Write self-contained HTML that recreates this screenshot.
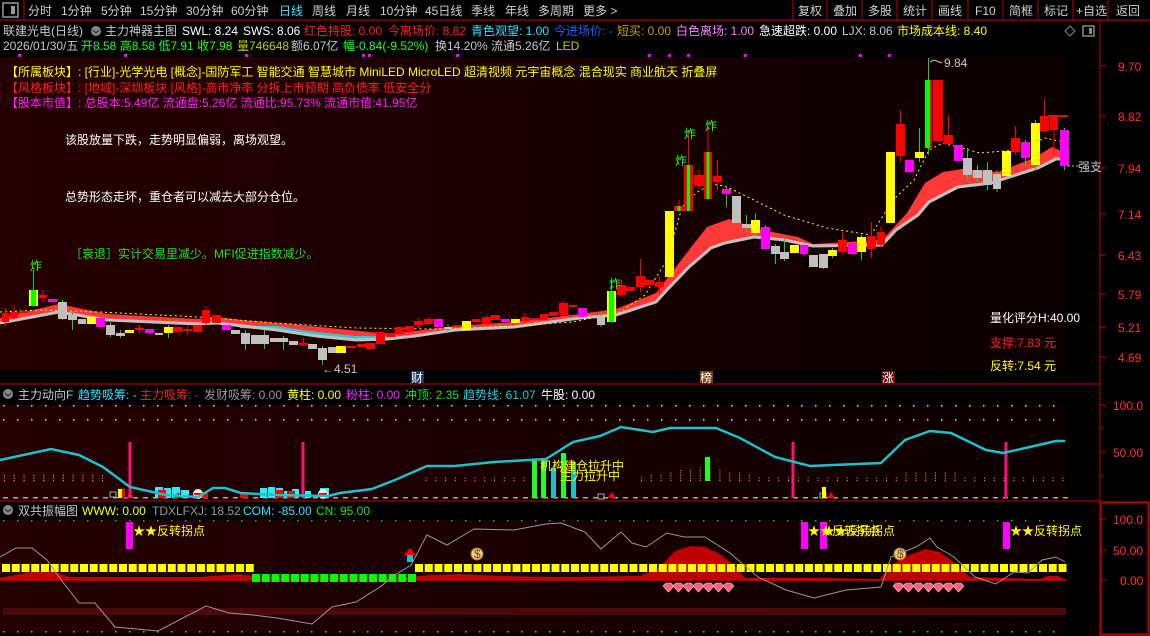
<!DOCTYPE html>
<html><head><meta charset="utf-8"><style>
html,body{margin:0;padding:0;background:#000;width:1150px;height:636px;overflow:hidden}
svg{display:block}
text{font-family:"Liberation Sans","Noto Sans CJK SC",sans-serif;font-size:12px}
</style></head><body>
<svg id="s" width="1150" height="636" viewBox="0 0 1150 636" xmlns="http://www.w3.org/2000/svg">
<defs>
<linearGradient id="bg" x1="0" x2="1" y1="0" y2="0"><stop offset="0" stop-color="#260000"/><stop offset="1" stop-color="#0c0000"/></linearGradient>
</defs>
<rect width="1150" height="636" fill="#000"/>
<!-- toolbar -->
<rect x="3" y="3" width="15" height="14" fill="none" stroke="#999" stroke-width="1.5"/><rect x="11" y="6" width="4" height="8" fill="#999"/>
<line x1="24" y1="0" x2="24" y2="20" stroke="#c00000"/>
<line x1="0" y1="20" x2="1150" y2="20" stroke="#c00000"/>
<g fill="#d0d0d0" font-size="13">
<text x="28" y="15">分时</text><text x="61" y="15">1分钟</text><text x="101" y="15">5分钟</text><text x="140" y="15">15分钟</text><text x="186" y="15">30分钟</text><text x="231" y="15">60分钟</text><text x="279" y="15" fill="#40e0ff">日线</text><text x="312" y="15">周线</text><text x="346" y="15">月线</text><text x="380" y="15">10分钟</text><text x="425" y="15">45日线</text><text x="471" y="15">季线</text><text x="505" y="15">年线</text><text x="538" y="15">多周期</text><text x="583" y="15">更多 &gt;</text>
<text x="798" y="15">复权</text><text x="833" y="15">叠加</text><text x="868" y="15">多股</text><text x="903" y="15">统计</text><text x="938" y="15">画线</text><text x="975" y="15">F10</text><text x="1009" y="15">简框</text><text x="1044" y="15">标记</text><text x="1076" y="15">+自选</text><text x="1116" y="15">返回</text>
</g>
<g stroke="#c00000"><line x1="793" y1="0" x2="793" y2="20"/><line x1="827" y1="0" x2="827" y2="20"/><line x1="862" y1="0" x2="862" y2="20"/><line x1="897" y1="0" x2="897" y2="20"/><line x1="932" y1="0" x2="932" y2="20"/><line x1="968" y1="0" x2="968" y2="20"/><line x1="1003" y1="0" x2="1003" y2="20"/><line x1="1038" y1="0" x2="1038" y2="20"/><line x1="1073" y1="0" x2="1073" y2="20"/><line x1="1108" y1="0" x2="1108" y2="20"/></g>
<!-- info lines -->
<text x="3" y="35" fill="#c8c8c8">联建光电(日线)</text>
<circle cx="96" cy="31" r="5" fill="#888"/><path d="M93 30l3 3 3-3" stroke="#222" fill="none"/>
<text x="105" y="35" fill="#c8c8c8">主力神器主图</text>
<text x="182" y="35" fill="#fff">SWL: 8.24</text><text x="243" y="35" fill="#fff">SWS: 8.06</text>
<text x="304" y="35" fill="#ff2020">红色持股: 0.00</text><text x="388" y="35" fill="#ff2020">今离场价: 8.82</text>
<text x="471" y="35" fill="#30e0ff">青色观望: 1.00</text><text x="554" y="35" fill="#2060ff">今进场价: -</text>
<text x="617" y="35" fill="#c8a000">短买: 0.00</text><text x="676" y="35" fill="#ff80ff">白色离场: 1.00</text>
<text x="759" y="35" fill="#fff">急速超跌: 0.00</text><text x="842" y="35" fill="#c8c8c8">LJX: 8.06</text>
<text x="897" y="35" fill="#ffff00">市场成本线: 8.40</text>
<path d="M1070 26l5 5-5 5-5-5z" stroke="#888" fill="none"/><rect x="1083" y="26" width="11" height="10" fill="none" stroke="#888" stroke-width="1.5"/><rect x="1089" y="28" width="3" height="6" fill="#888"/>
<text x="3" y="50" fill="#c8c8c8">2026/01/30/五</text>
<text x="81" y="50" fill="#20ff20">开8.58 高8.58 低7.91 收7.98</text>
<text x="237" y="50" fill="#c8c800">量746648</text><text x="291" y="50" fill="#c8c8c8">额6.07亿</text>
<text x="343" y="50" fill="#20ff20">幅-0.84(-9.52%)</text><text x="435" y="50" fill="#c8c8c8">换14.20% 流通5.26亿</text><text x="556" y="50" fill="#c8c800">LED</text>
<g fill="#ff00ff"><rect x="18" y="54" width="3" height="3"/><rect x="124" y="54" width="3" height="3"/><rect x="245" y="54" width="3" height="3"/><rect x="362" y="54" width="3" height="3"/><rect x="368" y="54" width="3" height="3"/><rect x="456" y="54" width="3" height="3"/><rect x="648" y="54" width="3" height="3"/><rect x="668" y="54" width="3" height="3"/><rect x="687" y="54" width="3" height="3"/><rect x="744" y="54" width="3" height="3"/><rect x="859" y="54" width="3" height="3"/><rect x="888" y="54" width="3" height="3"/></g>
<!-- main panel -->
<rect x="0" y="57" width="1066" height="313" fill="url(#bg)"/>
<g id="main"></g>
<!-- axis -->
<line x1="1100" y1="20" x2="1100" y2="636" stroke="#c00000"/>
<g fill="#ff3030" font-size="13">
<text x="1118" y="71">9.70</text><text x="1118" y="121">8.82</text><text x="1118" y="173">7.94</text><text x="1118" y="219">7.14</text><text x="1118" y="260">6.43</text><text x="1118" y="299">5.79</text><text x="1118" y="332">5.21</text><text x="1118" y="362">4.69</text>
</g>
<g stroke="#c00000"><line x1="1100" y1="66" x2="1106" y2="66"/><line x1="1100" y1="116" x2="1106" y2="116"/><line x1="1100" y1="168" x2="1106" y2="168"/><line x1="1100" y1="214" x2="1106" y2="214"/><line x1="1100" y1="255" x2="1106" y2="255"/><line x1="1100" y1="294" x2="1106" y2="294"/><line x1="1100" y1="327" x2="1106" y2="327"/><line x1="1100" y1="357" x2="1106" y2="357"/></g>
<!-- text overlays -->
<text x="6" y="76" fill="#ffff00" font-size="13">【所属板块】: [行业]-光学光电 [概念]-国防军工 智能交通 智慧城市 MiniLED MicroLED 超清视频 元宇宙概念 混合现实 商业航天 折叠屏</text>
<text x="6" y="92" fill="#ff2020" font-size="13">【风格板块】: [地域]-深圳板块 [风格]-高市净率 分拆上市预期 高负债率 低安全分</text>
<text x="6" y="107" fill="#ff20ff" font-size="13">【股本市值】: 总股本:5.49亿 流通盘:5.26亿 流通比:95.73% 流通市值:41.95亿</text>
<text x="65" y="144" fill="#fff">该股放量下跌，走势明显偏弱，离场观望。</text>
<text x="65" y="201" fill="#fff">总势形态走坏，重仓者可以减去大部分仓位。</text>
<text x="70" y="258" fill="#20e020">［衰退］实计交易里减少。MFI促进指数减少。</text>
<text x="990" y="322" fill="#fff">量化评分H:40.00</text>
<text x="990" y="347" fill="#ff2020">支撑:7.83 元</text>
<text x="990" y="370" fill="#ffff00">反转:7.54 元</text>
<text x="944" y="67" fill="#c8c8c8">9.84</text><path d="M930 62l4-2 8 3" stroke="#c8c8c8" fill="none"/>
<text x="322" y="373" fill="#c8c8c8">←4.51</text>
<text x="1078" y="171" fill="#c8c8c8">强支</text><line x1="1068" y1="166" x2="1078" y2="166" stroke="#c8c8c8" stroke-dasharray="2,2"/>
<!-- date strip -->
<rect x="411" y="371" width="13" height="12" fill="#1a3a6a"/><text x="411" y="382" fill="#fff" font-size="11">财</text>
<rect x="700" y="371" width="13" height="12" fill="#7a4010"/><text x="700" y="382" fill="#fff" font-size="11">榜</text>
<rect x="882" y="371" width="13" height="12" fill="#6a0a0a"/><text x="882" y="382" fill="#fff" font-size="11">涨</text>
<line x1="0" y1="384" x2="1100" y2="384" stroke="#c00000"/>
<!-- panel 1 -->
<circle cx="8" cy="394" r="5" fill="#888"/><path d="M5 393l3 3 3-3" stroke="#222" fill="none"/>
<text x="18" y="399" fill="#c8c8c8">主力动向F</text>
<text x="78" y="399" fill="#30e0ff">趋势吸筹: -</text><text x="140" y="399" fill="#ff2020">主力吸筹: -</text><text x="204" y="399" fill="#999">发财吸筹: 0.00</text>
<text x="287" y="399" fill="#ffff00">黄柱: 0.00</text><text x="346" y="399" fill="#ff20ff">粉柱: 0.00</text><text x="405" y="399" fill="#20e020">冲顶: 2.35</text>
<text x="463" y="399" fill="#30c8d8">趋势线: 61.07</text><text x="541" y="399" fill="#fff">牛股: 0.00</text>
<rect x="0" y="405" width="1066" height="95" fill="url(#bg)"/>
<g id="p1"></g>
<line x1="0" y1="501" x2="1100" y2="501" stroke="#c00000"/>
<g fill="#ff3030" font-size="13"><text x="1113" y="410">100.0</text><text x="1113" y="457">50.00</text></g>
<g stroke="#c00000"><line x1="1100" y1="405" x2="1106" y2="405"/><line x1="1100" y1="452" x2="1106" y2="452"/><line x1="1100" y1="428" x2="1104" y2="428"/><line x1="1100" y1="476" x2="1104" y2="476"/></g>
<!-- panel 2 -->
<circle cx="8" cy="510" r="5" fill="#888"/><path d="M5 509l3 3 3-3" stroke="#222" fill="none"/>
<text x="18" y="515" fill="#c8c8c8">双共振幅图</text>
<text x="82" y="515" fill="#ffff00">WWW: 0.00</text><text x="152" y="515" fill="#999">TDXLFXJ: 18.52</text><text x="243" y="515" fill="#30e0ff">COM: -85.00</text><text x="316" y="515" fill="#20e020">CN: 95.00</text>
<rect x="0" y="520" width="1066" height="113" fill="url(#bg)"/>
<g id="p2"></g>
<rect x="1100.5" y="502.5" width="48" height="132" fill="none" stroke="#c00000" stroke-width="2"/>
<g fill="#ff3030" font-size="13"><text x="1113" y="524">100.0</text><text x="1113" y="555">50.00</text><text x="1120" y="585">0.00</text></g>
<g stroke="#c00000"><line x1="1100" y1="519" x2="1106" y2="519"/><line x1="1100" y1="550" x2="1106" y2="550"/><line x1="1100" y1="580" x2="1106" y2="580"/></g>
<text x="133" y="535" fill="#ffff00">★★反转拐点</text>
<text x="808" y="535" fill="#ffff00">★★反转拐点</text>
<text x="823" y="535" fill="#ffff00">★★反转拐点</text>
<text x="1010" y="535" fill="#ffff00">★★反转拐点</text>
<g fill="#20ff20" font-size="11"><text x="30" y="270">炸</text><text x="609" y="288">炸</text><text x="675" y="165">炸</text><text x="684" y="138">炸</text><text x="705" y="130">炸</text></g>
</svg>
<script>
var NS="http://www.w3.org/2000/svg";
function el(p,t,a){var e=document.createElementNS(NS,t);for(var k in a)e.setAttribute(k,a[k]);document.getElementById(p).appendChild(e);return e;}
function poly(p,pts,a){a.points=pts.map(function(q){return q.join(',')}).join(' ');return el(p,'polyline',a);}
function pg(p,pts,a){a.points=pts.map(function(q){return q.join(',')}).join(' ');return el(p,'polygon',a);}
// bands
var gray=[[0,323],[59,312],[107,320],[198,324],[217,323],[277,330],[316,336],[356,340],[388,339],[415,336],[455,330],[514,327],[580,318],[616,315],[656,302],[667,290],[689,267],[711,248],[725,243],[754,237],[784,240],[813,246],[882,245],[896,230],[918,215],[929,202],[958,187],[991,183],[1016,175],[1038,168],[1056,159],[1066,159]];
var up=[[0,318],[59,304],[107,314],[198,319],[217,317],[250,321],[290,324],[330,328],[388,334],[415,331],[455,326],[514,322],[580,314],[616,309],[656,293],[689,250],[707,227],[729,219],[762,230],[798,237],[813,244],[882,240],[907,213],[925,183],[943,172],[962,169],[998,172],[1034,158],[1052,147],[1066,153]];
var band=up.concat(gray.slice().reverse());
pg('main',band,{fill:'#ff3838'});
pg('main',[[240,326],[277,326],[316,332],[356,336],[388,336],[388,339],[356,340],[316,336],[277,330],[240,328]],{fill:'#30c8d0'});
poly('main',gray,{fill:'none',stroke:'#c0c0c0','stroke-width':3});
poly('main',[[0,312],[40,310],[99,312],[198,317],[277,323],[356,328],[435,329],[514,326],[573,322],[620,312],[645,295],[667,260],[682,207],[696,193],[711,184],[725,186],[754,200],[784,215],[827,228],[871,235],[893,200],[914,180],[929,150],[943,143],[980,153],[1016,150],[1045,138],[1063,142]],{fill:'none',stroke:'#ffff00','stroke-dasharray':'2,3'});
var C={r:'#ff0000',y:'#ffff00',m:'#ff00ff',w:'#c0c0c0'};
var L=[[2,9,313,322,'r',308,326],[10,18,312,318,'r',305,320],[19,28,311,313,'r'],[29,38,290,306,'yg',270,306],[39,47,295,298,'r',290,302],[48,57,299,302,'m'],[58,67,302,319,'w',300,320],[68,77,315,320,'w',312,330],[78,86,319,324,'w'],[87,96,317,324,'y'],[96,105,318,327,'m'],[106,115,325,335,'w',322,337],[116,125,333,336,'w',330,338],[125,134,330,333,'y'],[135,144,328,330,'r',325,333],[145,154,329,333,'m'],[155,163,333,335,'w'],[164,173,327,333,'y',325,338],[173,182,327,332,'r'],[183,192,329,330,'r',326,334],[193,202,325,332,'r'],[202,210,310,323,'r',306,326],[212,221,315,323,'r'],[222,231,325,330,'m'],[231,240,330,334,'w'],[241,250,333,344,'w',330,350],[251,260,335,344,'w'],[260,269,335,344,'w',330,349],[270,279,338,342,'w'],[279,288,338,342,'w',336,350],[289,298,341,345,'w'],[299,308,343,344,'r',338,346],[308,317,344,349,'w'],[318,327,348,360,'w',346,365],[328,336,347,353,'w'],[336,346,346,353,'y'],[347,356,346,348,'r'],[357,366,344,347,'r'],[366,375,343,349,'r'],[376,385,332,344,'r'],[386,395,333,337,'r'],[395,404,327,334,'r'],[405,414,326,331,'r'],[414,423,321,325,'r',318,328],[424,433,319,324,'r',317,326],[434,443,319,327,'m'],[444,452,327,329,'w',324,331],[453,461,325,327,'r'],[462,471,321,330,'y'],[472,481,319,322,'r'],[482,491,317,324,'r',315,326],[491,500,315,320,'r'],[501,510,319,322,'m'],[511,520,319,323,'y'],[521,529,317,321,'r',313,323],[530,539,318,319,'r'],[540,548,314,320,'r'],[549,558,312,316,'r'],[559,568,303,315,'r',301,316],[569,577,305,307,'r'],[578,587,308,317,'m'],[588,596,316,318,'w'],[597,605,316,325,'w',312,327],[607,616,291,322,'yg',280,322],[617,626,285,295,'r',280,297],[626,635,287,291,'r'],[636,645,276,287,'r',259,292],[645,654,280,285,'r'],[655,664,282,287,'r',276,294],[665,674,211,277,'y'],[674,684,206,211,'rg',200,211],[684,693,165,211,'rg',130,211],[694,704,175,186,'r',170,190],[704,712,152,199,'rg',122,200],[713,722,176,182,'r',160,190],[722,731,189,194,'m',186,207],[732,741,196,223,'w'],[742,751,224,228,'w',215,232],[751,760,220,233,'y',213,236],[761,770,227,249,'m',225,250],[771,780,246,254,'w',244,264],[780,789,252,259,'w',238,261],[790,799,245,253,'y'],[800,808,245,254,'m',244,256],[809,818,255,267,'w'],[819,828,254,268,'w',254,269],[828,837,250,256,'y',248,258],[838,847,240,252,'r',232,254],[848,857,243,254,'m'],[857,866,237,252,'y',235,260],[867,876,236,249,'r',222,258],[877,885,232,245,'r',226,247],[886,895,152,223,'y'],[896,905,124,156,'r',110,162],[905,914,160,172,'m'],[915,924,152,158,'y',128,162],[925,932,80,148,'gr',58,155],[933,943,80,141,'r'],[944,953,135,144,'r',115,146],[954,963,145,161,'m'],[963,972,158,175,'w',148,180],[973,982,170,178,'w',165,182],[983,992,170,185,'w',162,190],[993,1001,174,189,'w',170,192],[1002,1011,151,176,'y'],[1011,1020,138,152,'r',126,155],[1021,1030,142,158,'m',140,166],[1031,1040,123,165,'y',120,170],[1040,1049,116,131,'r',98,133],[1050,1058,116,130,'r',115,155],[1060,1069,130,166,'m',128,170]];
L.forEach(function(c){var x1=c[0],x2=c[1],t=c[2],b=c[3],k=c[4];var cx=(x1+x2)/2;
 if(c[5]!==undefined){el('main','line',{x1:cx,x2:cx,y1:c[5],y2:c[6],stroke:(k=='r'||k=='rg')?'#ff0000':'#20d020'});}
 if(k=='yg'){el('main','rect',{x:x1,y:t,width:x2-x1,height:b-t,fill:'#ffff00'});el('main','rect',{x:x1+2,y:t,width:x2-x1-4,height:b-t,fill:'#00ff00'});}
 else if(k=='rg'){el('main','rect',{x:x1,y:t,width:x2-x1,height:b-t,fill:'#ff0000'});el('main','rect',{x:cx-1.5,y:t,width:3,height:b-t,fill:'#00ff00'});}
 else if(k=='gr'){el('main','rect',{x:x1,y:t,width:x2-x1,height:b-t,fill:'#00ff00'});el('main','rect',{x:x2-2,y:t,width:2,height:b-t,fill:'#ff0000'});}
 else el('main','rect',{x:x1,y:t,width:x2-x1,height:Math.max(2,b-t),fill:C[k]});
});
el('main','line',{x1:1048,x2:1068,y1:116,y2:116,stroke:'#ff0000','stroke-width':2});
// panel 1
for(var x=3;x<1066;x+=14){el('p1','rect',{x:x,y:405,width:1.5,height:1.5,fill:'#ddd'});el('p1','rect',{x:x,y:419,width:1.5,height:1.5,fill:'#ddd'});}
for(var x=3;x<1066;x+=10){el('p1','rect',{x:x,y:497,width:5,height:1.5,fill:'#aaa'});}
for(var x=4;x<1066;x+=9.8){if(x>110&&x<420)continue;if(x>530&&x<640)continue;var h=(x>640&&x<780)?(14-Math.abs(x-700)/6):((x>900&&x<960)?8:4);if(h<3)h=3;for(var yy=480;yy>480-h;yy-=2.5)el('p1','rect',{x:x,y:yy,width:1,height:1.2,fill:'#ff8080'});}
for(var x=4;x<110;x+=9.8){for(var yy=480;yy>474;yy-=2.5)el('p1','rect',{x:x,y:yy,width:1,height:1.2,fill:'#ff8080'});}
[[155,164,487],[164,172,488],[172,181,487],[181,190,490],[260,268,488],[268,276,487],[276,284,488],[284,292,491],[292,300,489],[305,312,491],[320,330,488]].forEach(function(b){el('p1','rect',{x:b[0],y:b[2],width:b[1]-b[0]-1,height:498-b[2],fill:'#20f0ff'});});
[[158,490],[200,493],[240,493],[275,490],[287,491]].forEach(function(b){el('p1','rect',{x:b[0],y:b[1],width:8,height:498-b[1],fill:'#ff0000'});});
el('p1','rect',{x:118,y:489,width:4,height:9,fill:'#ffff00'});el('p1','rect',{x:122,y:489,width:3,height:9,fill:'#ff0000'});
[[110,492],[598,494],[820,493]].forEach(function(b){el('p1','rect',{x:b[0],y:b[1],width:6,height:5,fill:'none',stroke:'#aaa'});});
el('p1','rect',{x:822,y:487,width:4,height:11,fill:'#ffff00'});
[[130],[178],[612],[831]].forEach(function(b){pg('p1',[[b[0]-4,498],[b[0],492],[b[0]+4,498]],{fill:'#ff0000'});});
[[198],[323]].forEach(function(b){el('p1','circle',{cx:b[0],cy:494,r:5,fill:'#eee'});el('p1','line',{x1:b[0]-4,x2:b[0]+4,y1:494,y2:494,stroke:'#f00','stroke-width':2});});
[[532,460,'#20ff20'],[541,460,'#20ff20'],[551,468,'#20c0c8'],[561,453,'#20ff20'],[571,462,'#20c0c8'],[705,457,'#20ff20']].forEach(function(b){el('p1','rect',{x:b[0],y:b[1],width:5,height:(b[0]==705?481:498)-b[1],fill:b[2]});});
[130,303,793,1006].forEach(function(x){el('p1','rect',{x:x-1.5,y:442,width:3,height:56,fill:'#ff1080'});});
var t=el('p1','text',{x:540,y:470,fill:'#ffff00','font-size':11});t.textContent='机构建仓拉升中';
t=el('p1','text',{x:560,y:480,fill:'#ffff00','font-size':11});t.textContent='主力拉升中';
poly('p1',[[0,460],[51,449],[79,455],[103,467],[130,487],[166,495],[198,497],[213,488],[225,488],[241,493],[277,495],[328,496],[340,493],[372,489],[395,480],[427,466],[455,466],[494,462],[546,459],[573,442],[600,436],[621,427],[653,432],[670,428],[716,428],[740,438],[775,457],[810,466],[881,463],[905,440],[930,431],[951,433],[986,450],[1003,453],[1021,449],[1056,441],[1065,441]],{fill:'none',stroke:'#20c0c8','stroke-width':2.5});
// panel 2
for(var x=3;x<1066;x+=14){el('p2','rect',{x:x,y:520,width:1.5,height:1.5,fill:'#20c020'});el('p2','rect',{x:x,y:631,width:1.5,height:1.5,fill:'#20d0d0'});}
el('p2','rect',{x:3,y:608,width:1063,height:7,fill:'#4a0a0a'});
pg('p2',[[0,580],[0,578],[20,574],[35,571],[55,572],[70,577],[200,577],[240,574],[260,577],[410,577],[430,575],[460,574],[500,576],[560,577],[640,576],[660,567],[675,551],[690,546],[705,547],[720,554],[735,566],[745,578],[820,578],[880,579],[890,566],[905,557],[925,549],[940,552],[955,563],[970,577],[1040,579],[1048,576],[1058,576],[1066,580]],{fill:'#c00000'});
el('p2','line',{x1:0,x2:1066,y1:580,y2:580,stroke:'#d00000','stroke-width':1.5});
for(var x=2;x<250;x+=9.75)el('p2','rect',{x:x,y:564,width:8,height:8,fill:'#ffff00'});
for(var x=252;x<412;x+=9.75)el('p2','rect',{x:x,y:574,width:8,height:8,fill:'#00ff00'});
for(var x=415;x<1066;x+=9.75)el('p2','rect',{x:x,y:564,width:8,height:8,fill:'#ffff00'});
[[126,522],[801,522],[820,522],[1003,522]].forEach(function(b){el('p2','rect',{x:b[0],y:b[1],width:7,height:27,fill:'#ff00ff'});});
pg('p2',[[404,555],[410,548],[416,555]],{fill:'#ff0000'});el('p2','rect',{x:407,y:555,width:6,height:7,fill:'#20c0c8'});
[477,900].forEach(function(x){el('p2','ellipse',{cx:x,cy:554,rx:6,ry:6,fill:'#f0d080',stroke:'#a07020'});var q=el('p2','text',{x:x-3,y:558,fill:'#804000','font-size':9});q.textContent='$';});
[663,893].forEach(function(x0){for(var i=0;i<7;i++){var x=x0+i*10;pg('p2',[[x,586],[x+3,583],[x+8,583],[x+11,586],[x+5.5,592]],{fill:'#ff6080',stroke:'#ffc0c8','stroke-width':0.6});}});
poly('p2',[[0,557],[16,548],[32,548],[47,560],[59,577],[79,603],[95,603],[115,627],[158,631],[206,606],[229,613],[253,615],[277,618],[312,624],[332,607],[356,602],[380,587],[395,575],[411,565],[427,535],[447,545],[474,529],[514,530],[546,524],[561,523],[585,532],[601,549],[621,532],[632,543],[646,547],[667,533],[684,537],[705,537],[730,553],[758,577],[786,590],[814,598],[846,590],[881,587],[891,557],[916,547],[930,538],[937,547],[954,557],[975,577],[996,584],[1014,572],[1028,573],[1042,560],[1056,557],[1065,562]],{fill:'none',stroke:'#999','stroke-width':1});
</script>
</body></html>
